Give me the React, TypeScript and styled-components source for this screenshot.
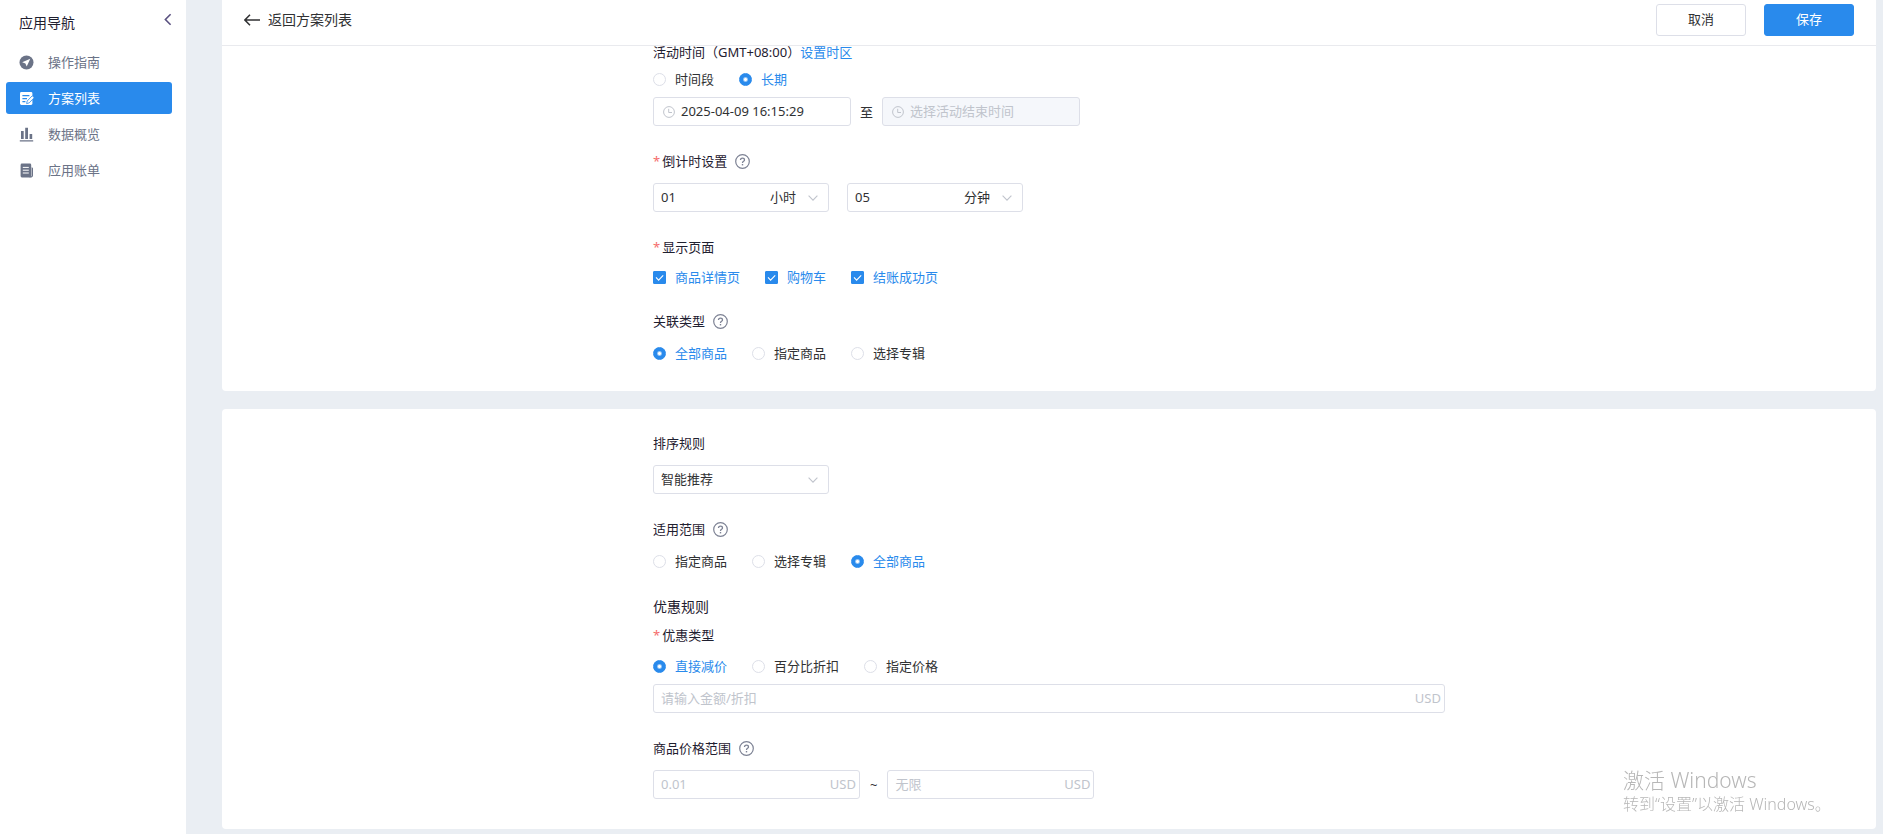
import React, { useState } from "react";
import styled, { createGlobalStyle, css } from "styled-components";

const color = {
  blue: "#298aec",
  page: "#eaeef3",
  border: "#dddfe8",
  text: "#303133",
  heading: "#1f2030",
  nav: "#6b7387",
  faint: "#c0c4cc",
  icon: "#7d8294",
};

const GlobalStyle = createGlobalStyle`
  *, *::before, *::after { box-sizing: border-box; }
  body {
    margin: 0;
    background: ${color.page};
    color: ${color.text};
    font-family: "Noto Sans", "Noto Sans CJK SC", sans-serif;
    font-size: 13px;
    line-height: 18px;
  }
  button, input, select { font: inherit; color: inherit; }
`;

const Layout = styled.div`
  display: flex;
  min-height: 100vh;
`;

const Sidebar = styled.aside`
  flex: 0 0 186px;
  background: #fff;
  padding: 10px 14px 0 6px;
`;

const SidebarHead = styled.div`
  display: flex;
  align-items: flex-start;
  justify-content: space-between;
  height: 36px;
  padding-left: 13px;
`;

const SidebarTitle = styled.h1`
  margin: 0;
  font-size: 14px;
  font-weight: 400;
  line-height: 26px;
  color: ${color.heading};
`;

const IconButton = styled.button`
  display: flex;
  padding: 3px 0;
  border: 0;
  background: none;
  cursor: pointer;
`;

const Nav = styled.nav`
  display: flex;
  flex-direction: column;
  gap: 4px;
`;

const NavLink = styled.a<{ $active?: boolean }>`
  display: flex;
  align-items: center;
  gap: 14px;
  height: 32px;
  padding-left: 13px;
  border-radius: 3px;
  text-decoration: none;
  color: ${(p) => (p.$active ? "#fff" : color.nav)};
  background: ${(p) => (p.$active ? color.blue : "transparent")};
`;

const Main = styled.main`
  flex: 1;
  min-width: 0;
  padding: 0 7px 5px 36px;
`;

const TopBar = styled.header`
  position: sticky;
  top: 0;
  z-index: 1;
  display: flex;
  align-items: flex-start;
  justify-content: space-between;
  height: 46px;
  padding: 4px 22px 0;
  background: #fff;
  border-bottom: 1px solid #e9eaee;
`;

const BackLink = styled.a`
  display: flex;
  align-items: center;
  gap: 8px;
  height: 32px;
  font-size: 14px;
  color: ${color.text};
  text-decoration: none;
`;

const Actions = styled.div`
  display: flex;
  gap: 18px;
`;

const Button = styled.button<{ $primary?: boolean }>`
  width: 90px;
  height: 32px;
  padding: 0 0 2px;
  border: 1px solid ${(p) => (p.$primary ? color.blue : color.border)};
  border-radius: 3px;
  background: ${(p) => (p.$primary ? color.blue : "#fff")};
  color: ${(p) => (p.$primary ? "#fff" : color.text)};
  cursor: pointer;
`;

const Card = styled.section<{ $continued?: boolean }>`
  background: #fff;
  border-radius: ${(p) => (p.$continued ? "0 0 4px 4px" : "4px")};
  padding: ${(p) => (p.$continued ? "0 24px 29px" : "27px 24px 30px")};

  & + & {
    margin-top: 18px;
  }
`;

const Form = styled.div`
  display: flex;
  flex-direction: column;
  gap: 28px;
  max-width: 792px;
  margin: 0 auto;
`;

const Field = styled.div<{ $gap?: number }>`
  display: flex;
  flex-direction: column;
  gap: ${(p) => p.$gap ?? 15}px;
`;

const Label = styled.div`
  display: flex;
  align-items: center;
  height: 14px;
  line-height: 12px;
  color: ${color.heading};
`;

const TimeLabel = styled(Label)`
  height: 12px;
`;

const SectionTitle = styled.h2`
  margin: 0;
  font-size: 14px;
  font-weight: 400;
  line-height: 18px;
  color: ${color.heading};
`;

const Required = styled.span`
  margin-right: 2px;
  color: #f56c6c;
`;

const TextLink = styled.a`
  color: ${color.blue};
  text-decoration: none;
`;

const HelpButton = styled(IconButton)`
  margin-left: 8px;
  padding: 0;
  color: ${color.icon};
`;

const Options = styled.div`
  display: flex;
  flex-wrap: wrap;
  gap: 25px;
`;

const OptionLabel = styled.label`
  display: flex;
  align-items: center;
  gap: 9px;
  height: 18px;
  cursor: pointer;

  &:has(input:checked) {
    color: ${color.blue};
  }
`;

const boxBase = css`
  appearance: none;
  width: 13px;
  height: 13px;
  margin: 0;
  border: 1px solid ${color.border};
  background: #fff;
`;

const Radio = styled.input`
  ${boxBase}
  border-radius: 50%;

  &:checked {
    border-color: ${color.blue};
    background: radial-gradient(circle, #fff 1px, ${color.blue} 3px);
  }
`;

const CheckWrap = styled.span`
  display: grid;

  & > * {
    grid-area: 1 / 1;
  }
  svg {
    pointer-events: none;
  }
`;

const Checkbox = styled.input`
  ${boxBase}
  border-radius: 1px;

  &:checked {
    border-color: ${color.blue};
    background: ${color.blue};
  }
`;

const Controls = styled.div<{ $gap?: number }>`
  display: flex;
  align-items: center;
  gap: ${(p) => p.$gap ?? 18}px;
`;

const Box = styled.div<{ $width?: number; $disabled?: boolean; $tight?: boolean }>`
  display: flex;
  align-items: center;
  width: ${(p) => (p.$width ? `${p.$width}px` : "100%")};
  height: 29px;
  padding: 0 ${(p) => (p.$tight ? 3 : 10)}px 0 7px;
  border: 1px solid ${color.border};
  border-radius: 3px;
  background: ${(p) => (p.$disabled ? "#f5f7fb" : "#fff")};
`;

const fieldBase = css`
  flex: 1;
  min-width: 0;
  height: 24px;
  padding: 0 0 2px;
  border: 0;
  outline: 0;
  background: none;
`;

const Input = styled.input`
  ${fieldBase}
  &::placeholder {
    color: ${color.faint};
    opacity: 1;
  }
`;

const Select = styled.select`
  ${fieldBase}
  appearance: none;
`;

const Unit = styled.span`
  padding-bottom: 2px;
  margin-right: 12px;
`;

const Currency = styled.span`
  padding-bottom: 2px;
  color: ${color.faint};
`;

const DateIcon = styled.span`
  display: flex;
  margin: 0 6px 0 2px;
  color: ${color.faint};
`;

const Watermark = styled.div`
  position: fixed;
  right: 60px;
  bottom: 19px;
  width: 200px;
  color: #b7b7b7;
  font-size: 16px;
  font-weight: 300;
  line-height: 22px;
  white-space: nowrap;
  pointer-events: none;
`;

const WatermarkTitle = styled.div`
  font-size: 21px;
  line-height: 26px;
`;

const GuideIcon = () => (
  <svg width="15" height="15" viewBox="0 0 15 15" aria-hidden="true">
    <circle cx="7.5" cy="7.5" r="7" fill="currentColor" />
    <path d="M11.3 3.8 3.2 7.2l3.2 1.2 1.3 3.2z" fill="#fff" />
  </svg>
);

const PlanIcon = () => (
  <svg width="15" height="15" viewBox="0 0 15 15" aria-hidden="true">
    <rect x="1" y="1" width="12.4" height="13" rx="1.4" fill="currentColor" />
    <path d="M3.4 4.6h7M3.4 7.6h4.6M3.4 10.6h3" stroke={color.blue} strokeWidth="1.1" />
    <path d="m7.6 12.6.6-2.6 5-5.2 2 1.9-5 5.2z" fill="currentColor" stroke={color.blue} strokeWidth="0.8" />
  </svg>
);

const ChartIcon = () => (
  <svg width="15" height="15" viewBox="0 0 15 15" fill="currentColor" aria-hidden="true">
    <path d="M2 4h2.7v8H2zM6.2.8H9V12H6.2zM10.6 7h2.6v5h-2.6zM.8 13.2h13.4v1.2H.8z" />
  </svg>
);

const BillIcon = () => (
  <svg width="15" height="15" viewBox="0 0 15 15" fill="currentColor" aria-hidden="true">
    <rect x="1.6" y="0.6" width="10.6" height="13.8" rx="1.3" />
    <path d="M12.6 4.2c.9.100 1.400.600 1.400 1.400v7c0 1.100-.700 1.800-1.800 1.800h-2l2.400-1.400z" />
    <path d="M3.800 4.400h6M3.800 7.200h6M3.800 10h6" stroke="#fff" strokeWidth="1" />
  </svg>
);

const CollapseIcon = () => (
  <svg width="8" height="13" viewBox="0 0 8 13" fill="none" stroke="#5a5180" strokeWidth="1.6" aria-hidden="true">
    <path d="M6.6 1.2 1.4 6.5l5.2 5.300" />
  </svg>
);

const BackIcon = () => (
  <svg width="16" height="12" viewBox="0 0 16 12" fill="none" stroke="currentColor" strokeWidth="1.5" aria-hidden="true">
    <path d="M6 .8.9 6 6 11.2M1 6h15" />
  </svg>
);

const HelpIcon = () => (
  <svg width="15" height="15" viewBox="0 0 15 15" fill="none" stroke="currentColor" aria-hidden="true">
    <circle cx="7.5" cy="7.5" r="6.8" strokeWidth="1.2" />
    <path d="M5.5 6.1c0-1.2.8-2 2-2s2 .7 2 1.8c0 1.4-2 1.5-2 3" strokeWidth="1.3" />
    <path d="M7.5 10v1.4" strokeWidth="1.4" />
  </svg>
);

const ClockIcon = () => (
  <svg width="12" height="12" viewBox="0 0 12 12" fill="none" stroke="currentColor" aria-hidden="true">
    <circle cx="6" cy="6" r="5.4" />
    <path d="M5.7 2.8v3.7H9" />
  </svg>
);

const ChevronIcon = () => (
  <svg width="10" height="6" viewBox="0 0 10 6" fill="none" stroke={color.faint} strokeWidth="1.1" aria-hidden="true">
    <path d="m.6.6 4.4 4.6L9.4.6" />
  </svg>
);

const CheckIcon = () => (
  <svg width="13" height="13" viewBox="0 0 13 13" fill="none" stroke="#fff" strokeWidth="1.1" aria-hidden="true">
    <path d="m3 6.4 2.6 2.7L10.2 4.4" />
  </svg>
);

const Help = ({ about }: { about: string }) => (
  <HelpButton type="button" aria-label={about}>
    <HelpIcon />
  </HelpButton>
);

function RadioOptions({ name, items, initial }: { name: string; items: string[]; initial: string }) {
  const [value, setValue] = useState(initial);
  return (
    <Options role="radiogroup">
      {items.map((item) => (
        <OptionLabel key={item}>
          <Radio type="radio" name={name} checked={value === item} onChange={() => setValue(item)} />
          {item}
        </OptionLabel>
      ))}
    </Options>
  );
}

function CheckOptions({ items }: { items: string[] }) {
  return (
    <Options>
      {items.map((item) => (
        <OptionLabel key={item}>
          <CheckWrap>
            <Checkbox type="checkbox" defaultChecked />
            <CheckIcon />
          </CheckWrap>
          {item}
        </OptionLabel>
      ))}
    </Options>
  );
}

function SelectBox({ label, value, unit }: { label: string; value: string; unit?: string }) {
  return (
    <Box $width={176}>
      <Select aria-label={label} defaultValue={value}>
        <option value={value}>{value}</option>
      </Select>
      {unit && <Unit>{unit}</Unit>}
      <ChevronIcon />
    </Box>
  );
}

const navItems = [
  { text: "操作指南", Icon: GuideIcon },
  { text: "方案列表", Icon: PlanIcon, active: true },
  { text: "数据概览", Icon: ChartIcon },
  { text: "应用账单", Icon: BillIcon },
];

export default function App() {
  return (
    <>
      <GlobalStyle />
      <Layout>
        <Sidebar>
          <SidebarHead>
            <SidebarTitle>应用导航</SidebarTitle>
            <IconButton type="button" aria-label="收起">
              <CollapseIcon />
            </IconButton>
          </SidebarHead>
          <Nav>
            {navItems.map(({ text, Icon, active }) => (
              <NavLink key={text} href="#" $active={active}>
                <Icon />
                {text}
              </NavLink>
            ))}
          </Nav>
        </Sidebar>

        <Main>
          <TopBar>
            <BackLink href="#">
              <BackIcon />
              返回方案列表
            </BackLink>
            <Actions>
              <Button type="button">取消</Button>
              <Button type="button" $primary>
                保存
              </Button>
            </Actions>
          </TopBar>

          <Card $continued>
            <Form>
              <Field $gap={12}>
                <TimeLabel>
                  活动时间（GMT+08:00）<TextLink href="#">设置时区</TextLink>
                </TimeLabel>
                <Field $gap={9}>
                  <RadioOptions name="period" items={["时间段", "长期"]} initial="长期" />
                  <Controls $gap={9}>
                    <Box $width={198}>
                      <DateIcon>
                        <ClockIcon />
                      </DateIcon>
                      <Input aria-label="活动开始时间" defaultValue="2025-04-09 16:15:29" />
                    </Box>
                    至
                    <Box $width={198} $disabled>
                      <DateIcon>
                        <ClockIcon />
                      </DateIcon>
                      <Input aria-label="活动结束时间" placeholder="选择活动结束时间" disabled />
                    </Box>
                  </Controls>
                </Field>
              </Field>

              <Field>
                <Label>
                  <Required>*</Required>倒计时设置
                  <Help about="倒计时设置说明" />
                </Label>
                <Controls>
                  <SelectBox label="小时" value="01" unit="小时" />
                  <SelectBox label="分钟" value="05" unit="分钟" />
                </Controls>
              </Field>

              <Field $gap={14}>
                <Label>
                  <Required>*</Required>显示页面
                </Label>
                <CheckOptions items={["商品详情页", "购物车", "结账成功页"]} />
              </Field>

              <Field $gap={16}>
                <Label>
                  关联类型
                  <Help about="关联类型说明" />
                </Label>
                <RadioOptions name="relation" items={["全部商品", "指定商品", "选择专辑"]} initial="全部商品" />
              </Field>
            </Form>
          </Card>

          <Card>
            <Form>
              <Field>
                <Label>排序规则</Label>
                <SelectBox label="排序规则" value="智能推荐" />
              </Field>

              <Field $gap={16}>
                <Label>
                  适用范围
                  <Help about="适用范围说明" />
                </Label>
                <RadioOptions name="scope" items={["指定商品", "选择专辑", "全部商品"]} initial="全部商品" />
              </Field>

              <Field $gap={12}>
                <SectionTitle>优惠规则</SectionTitle>
                <Field>
                  <Label>
                    <Required>*</Required>优惠类型
                  </Label>
                  <Field $gap={9}>
                    <RadioOptions name="discount" items={["直接减价", "百分比折扣", "指定价格"]} initial="直接减价" />
                    <Box $tight>
                      <Input aria-label="金额/折扣" placeholder="请输入金额/折扣" />
                      <Currency>USD</Currency>
                    </Box>
                  </Field>
                </Field>
              </Field>

              <Field>
                <Label>
                  商品价格范围
                  <Help about="商品价格范围说明" />
                </Label>
                <Controls $gap={10}>
                  <Box $width={207} $tight>
                    <Input aria-label="最低价格" placeholder="0.01" />
                    <Currency>USD</Currency>
                  </Box>
                  ~
                  <Box $width={207} $tight>
                    <Input aria-label="最高价格" placeholder="无限" />
                    <Currency>USD</Currency>
                  </Box>
                </Controls>
              </Field>
            </Form>
          </Card>
        </Main>
      </Layout>
      <Watermark>
        <WatermarkTitle>激活 Windows</WatermarkTitle>
        转到“设置”以激活 Windows。
      </Watermark>
    </>
  );
}
